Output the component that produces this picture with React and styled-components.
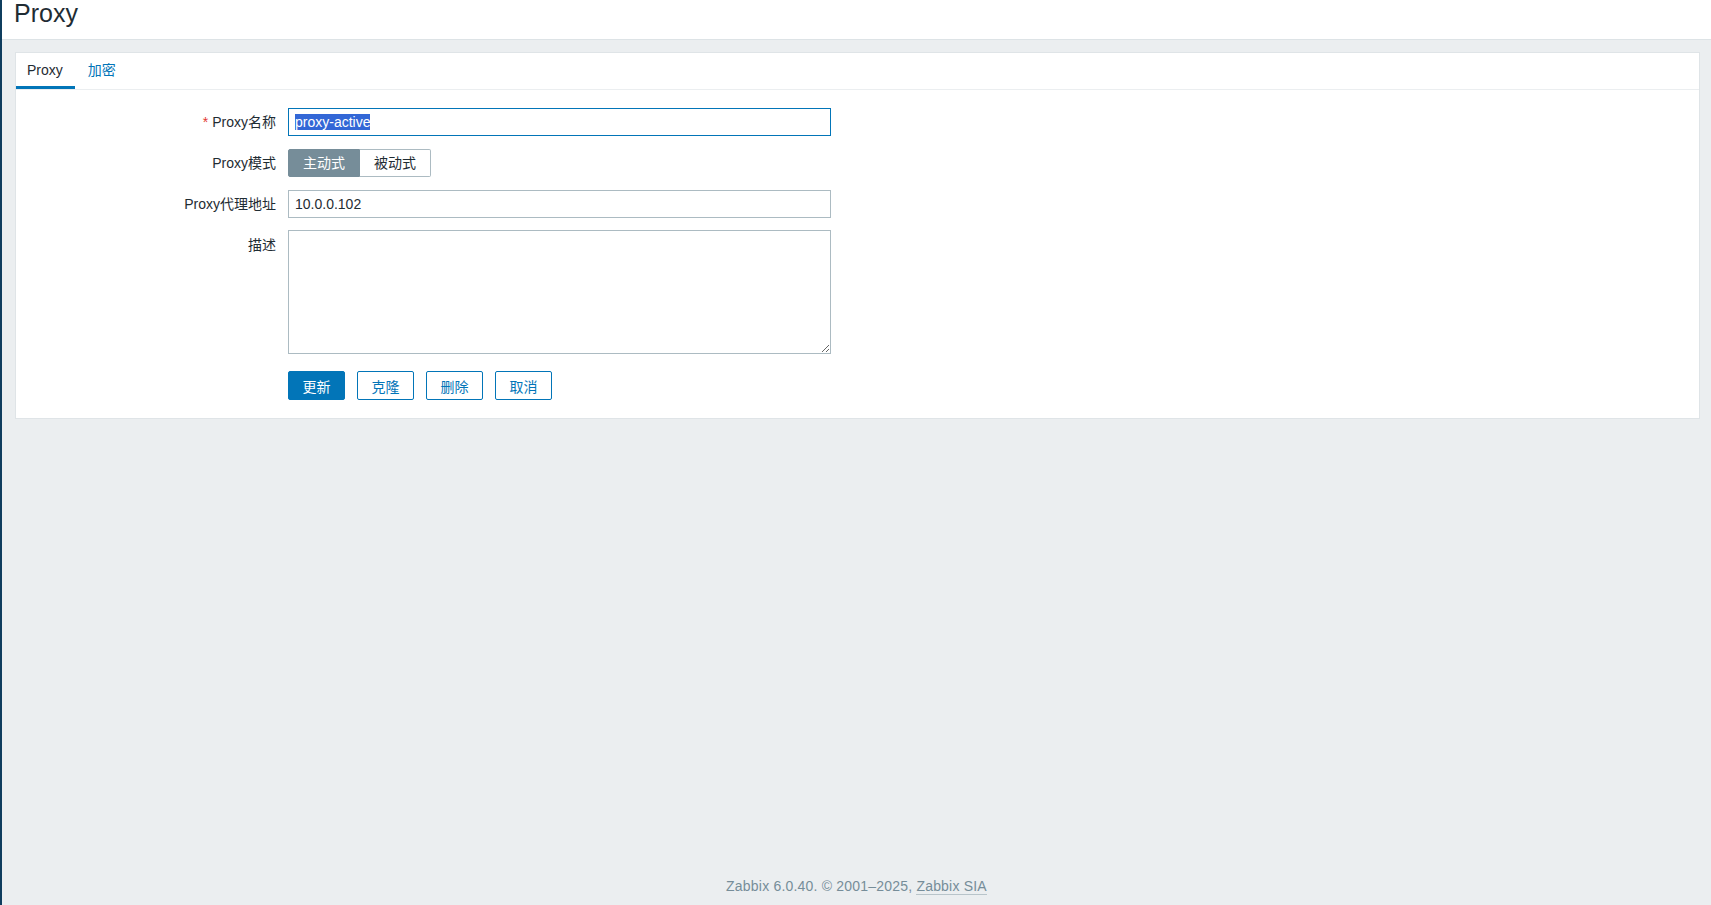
import React from 'react';
import styled, { createGlobalStyle } from 'styled-components';

const GlobalStyle = createGlobalStyle`
  html, body {
    margin: 0;
    padding: 0;
  }
  body {
    font-family: "Liberation Sans", Arial, "Noto Sans CJK SC", sans-serif;
    font-size: 14px;
    color: #1f2c33;
    background-color: #ebeef0;
  }
  * {
    box-sizing: border-box;
  }
`;

const Page = styled.div`
  display: flex;
  min-height: 100vh;
`;

const SideStripe = styled.div`
  width: 2px;
  flex-shrink: 0;
  background-color: #0f3d5e;
`;

const Main = styled.div`
  flex: 1;
  display: flex;
  flex-direction: column;
  min-width: 0;
`;

const Header = styled.header`
  height: 40px;
  padding: 1px 12px 0;
  background-color: #ffffff;
  border-bottom: 1px solid #dde3e6;
`;

const Title = styled.h1`
  margin: 0;
  font-size: 25px;
  line-height: 25px;
  font-weight: normal;
  color: #1f2c33;
`;

const Content = styled.main`
  flex: 1;
  padding: 12px 11px 0 13px;
`;

const Panel = styled.section`
  background-color: #ffffff;
  border: 1px solid #dfe4e7;
`;

const TabBar = styled.nav`
  display: flex;
  height: 37px;
  border-bottom: 1px solid #ebeef0;
`;

const Tab = styled.a`
  display: block;
  height: 36px;
  padding: 2px 12px 0 11px;
  line-height: 31px;
  cursor: pointer;
  color: ${(p) => (p.$active ? '#1f2c33' : '#0275b8')};
  border-bottom: 3px solid ${(p) => (p.$active ? '#0275b8' : 'transparent')};

  & + & {
    padding-left: 13px;
  }
`;

const Form = styled.form`
  display: grid;
  grid-template-columns: 260px 543px;
  column-gap: 12px;
  row-gap: 13px;
  padding: 18px 0 18px;
`;

const Label = styled.label`
  text-align: right;
  line-height: 28px;
  white-space: nowrap;
`;

const Required = styled.span`
  color: #e33734;
  margin-right: 4px;
`;

const TextBox = styled.div`
  height: 28px;
  padding: 0 6px;
  line-height: 26px;
  border: 1px solid ${(p) => (p.$focused ? '#0275b8' : '#acbbc2')};
  background-color: #ffffff;
  color: #1f2c33;
  white-space: nowrap;
  overflow: hidden;
`;

const Selected = styled.span`
  background-color: #3367d6;
  color: #ffffff;
`;

const Segments = styled.div`
  display: flex;
`;

const Segment = styled.label`
  height: 28px;
  padding: 0 14px;
  line-height: 26px;
  border: 1px solid ${(p) => (p.$checked ? '#768d99' : '#acbbc2')};
  background-color: ${(p) => (p.$checked ? '#768d99' : '#ffffff')};
  color: ${(p) => (p.$checked ? '#ffffff' : '#1f2c33')};
  cursor: pointer;

  &:first-child {
    border-radius: 2px 0 0 2px;
  }
  &:last-child {
    border-left: none;
    border-radius: 0 2px 2px 0;
  }
`;

const TextArea = styled.textarea`
  display: block;
  width: 543px;
  height: 124px;
  margin: -1px 0 0;
  padding: 4px 6px;
  border: 1px solid #acbbc2;
  font: inherit;
  color: #1f2c33;
  outline: none;
`;

const Buttons = styled.div`
  grid-column: 2;
  display: flex;
  gap: 12px;
  margin-top: 4px;
`;

const Button = styled.button`
  width: 57px;
  height: 29px;
  padding: 0;
  font: inherit;
  border-radius: 2px;
  border: 1px solid #0275b8;
  background-color: ${(p) => (p.$primary ? '#0275b8' : '#ffffff')};
  color: ${(p) => (p.$primary ? '#ffffff' : '#0275b8')};
  cursor: pointer;
`;

const Footer = styled.footer`
  height: 38px;
  line-height: 38px;
  text-align: center;
  letter-spacing: 0.2px;
  color: #768d99;
`;

const FooterLink = styled.a`
  color: #768d99;
  text-decoration: none;
  border-bottom: 1px solid #b8c4ca;
`;

const App = () => {
  return (
    <>
      <GlobalStyle />
      <Page>
        <SideStripe />
        <Main>
          <Header>
            <Title>Proxy</Title>
          </Header>
          <Content>
            <Panel>
              <TabBar>
                <Tab $active>Proxy</Tab>
                <Tab>加密</Tab>
              </TabBar>
              <Form onSubmit={(e) => e.preventDefault()}>
                <Label>
                  <Required>*</Required>Proxy名称
                </Label>
                <TextBox $focused>
                  <Selected>proxy-active</Selected>
                </TextBox>

                <Label>Proxy模式</Label>
                <Segments>
                  <Segment $checked>主动式</Segment>
                  <Segment>被动式</Segment>
                </Segments>

                <Label>Proxy代理地址</Label>
                <TextBox>10.0.0.102</TextBox>

                <Label>描述</Label>
                <TextArea />

                <Buttons>
                  <Button $primary type="submit">更新</Button>
                  <Button type="button">克隆</Button>
                  <Button type="button">删除</Button>
                  <Button type="button">取消</Button>
                </Buttons>
              </Form>
            </Panel>
          </Content>
          <Footer>
            Zabbix 6.0.40. © 2001–2025, <FooterLink>Zabbix SIA</FooterLink>
          </Footer>
        </Main>
      </Page>
    </>
  );
};

export default App;
